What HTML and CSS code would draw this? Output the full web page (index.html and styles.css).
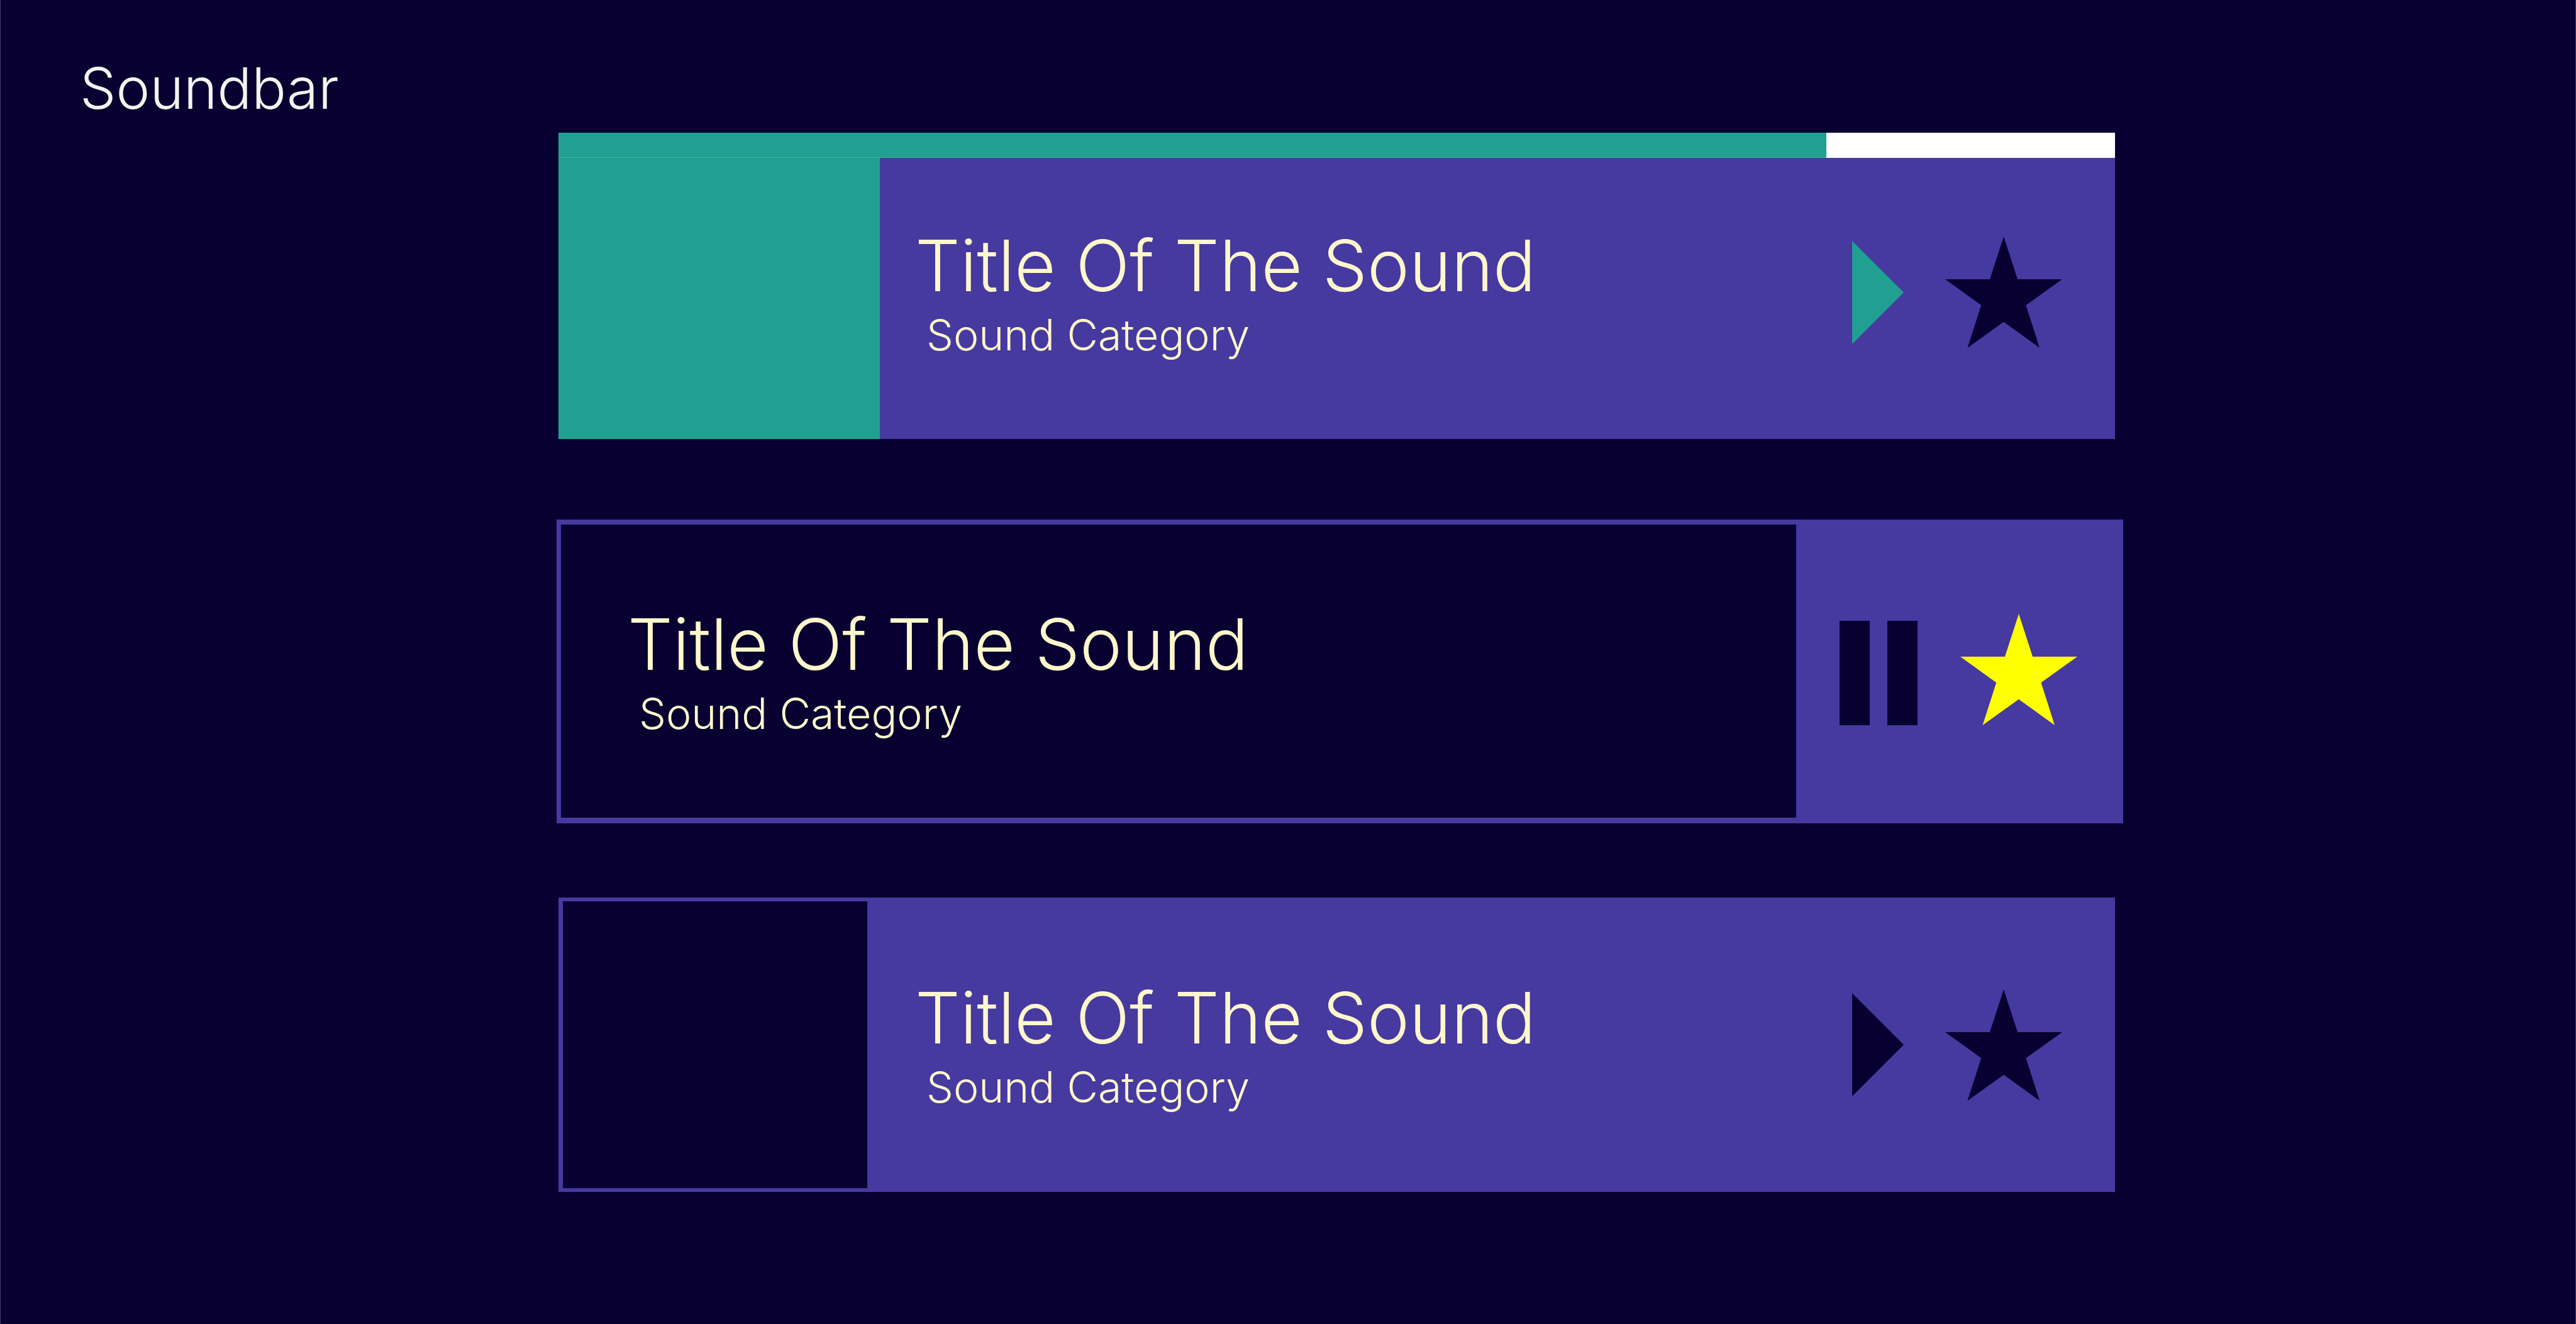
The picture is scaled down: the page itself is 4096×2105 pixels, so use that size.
FILE: index.html
```html
<!DOCTYPE html>
<html lang="en">
<head>
<meta charset="utf-8">
<title>Soundbar</title>
<link rel="stylesheet" href="styles.css">
</head>
<body>
<svg class="sprite" aria-hidden="true">
  <symbol id="star" viewBox="0 0 194 185" preserveAspectRatio="none">
    <path d="M97 0l23 71h74l-60 43.300 22.500 70.700-59.500-43.200L37 185l22.700-70.700L0 71h74z"/>
  </symbol>
  <symbol id="play" viewBox="0 0 82 164">
    <path d="M0 0l82 82-82 82z"/>
  </symbol>
  <symbol id="pause" viewBox="0 0 124 166">
    <path d="M0 0h48v166H0zM76 0h48v166H76z"/>
  </symbol>
</svg>
<header class="header">
  <h1 class="heading">Soundbar</h1>
</header>
<main class="list">
  <article class="card card--progress">
    <div class="progress" role="progressbar" aria-label="Playback" aria-valuenow="81" aria-valuemin="0" aria-valuemax="100">
      <div class="progress-fill" style="width: 81.45%"></div>
    </div>
    <div class="row">
      <div class="cover cover--teal"></div>
      <div class="info">
        <h2 class="title">Title Of The Sound</h2>
        <p class="category">Sound Category</p>
      </div>
      <div class="actions">
        <button class="button button--teal" type="button" aria-label="Play"><svg class="play"><use href="#play"/></svg></button>
        <button class="button" type="button" aria-label="Favourite" aria-pressed="false"><svg class="star"><use href="#star"/></svg></button>
      </div>
    </div>
  </article>
  <article class="card card--playing">
    <div class="row">
      <div class="info">
        <h2 class="title">Title Of The Sound</h2>
        <p class="category">Sound Category</p>
      </div>
      <div class="actions">
        <button class="button" type="button" aria-label="Pause"><svg class="pause"><use href="#pause"/></svg></button>
        <button class="button" type="button" aria-label="Favourite" aria-pressed="true"><svg class="star"><use href="#star"/></svg></button>
      </div>
    </div>
  </article>
  <article class="card card--idle">
    <div class="row">
      <div class="cover"></div>
      <div class="info">
        <h2 class="title">Title Of The Sound</h2>
        <p class="category">Sound Category</p>
      </div>
      <div class="actions">
        <button class="button" type="button" aria-label="Play"><svg class="play"><use href="#play"/></svg></button>
        <button class="button" type="button" aria-label="Favourite" aria-pressed="false"><svg class="star"><use href="#star"/></svg></button>
      </div>
    </div>
  </article>
</main>
</body>
</html>
```
FILE: styles.css
```css
:root {
  --night: #080031;
  --violet: #4639a0;
  --teal: #21a091;
  --cream: #fff7cc;
}

* {
  box-sizing: border-box;
}

body {
  margin: 0;
  min-height: 100vh;
  border: solid #453d68;
  border-width: 0 1px;
  background: var(--night);
  color: var(--cream);
  font-family: Inter, "Open Sans", sans-serif;
  font-weight: 300;
}

.sprite {
  display: none;
}

.header {
  padding: 84px 126px 15px;
}

.heading,
.title,
.category {
  margin: 0;
  font-weight: 300;
  white-space: nowrap;
}

.heading {
  color: #f5f3ef;
  font-size: 91px;
  line-height: 112px;
}

.list {
  padding: 0 732px 128px 887px;
}

.card {
  background: var(--violet);
}

.progress {
  height: 40px;
  background: #fff;
}

.progress-fill {
  height: 100%;
  border-bottom: 1px solid #45b3a4;
  background: var(--teal);
}

.row {
  display: flex;
  align-items: stretch;
}

.cover {
  width: 484px;
  background: var(--night);
}

.cover--teal {
  width: 511px;
  background: var(--teal);
}

.info {
  flex: 1;
  display: flex;
  flex-direction: column;
  justify-content: center;
  gap: 14px;
  padding-left: 56px;
}

.title {
  font-size: 113px;
  line-height: 120px;
}

.category {
  padding-left: 18px;
  font-size: 68px;
  line-height: 72px;
}

.actions {
  display: flex;
  align-items: center;
  gap: 66px;
  padding-right: 84px;
}

.button {
  padding: 0;
  border: 0;
  background: none;
  color: var(--night);
  cursor: pointer;
}

.button svg {
  display: block;
  fill: currentColor;
}

.button--teal {
  color: var(--teal);
}

.button[aria-pressed="true"] {
  color: #ff0;
}

.star {
  width: 186px;
  height: 177px;
}

.play {
  width: 82px;
  height: 164px;
}

.pause {
  width: 124px;
  height: 166px;
}

.card--progress .row {
  min-height: 447px;
}

.card--progress .info,
.card--progress .actions {
  padding-bottom: 20px;
}

.card--playing {
  margin: 128px -13px 118px -3px;
  padding: 8px 0 9px 7px;
}

.card--playing .row {
  min-height: 466px;
}

.card--playing .info {
  padding-left: 106px;
  background: var(--night);
}

.card--playing .actions {
  align-items: flex-end;
  gap: 68px;
  padding: 0 73px 147px 69px;
}

.card--idle {
  padding: 6px 0 6px 7px;
}

.card--idle .row {
  min-height: 456px;
}

.card--idle .info {
  padding-left: 76px;
}
```
